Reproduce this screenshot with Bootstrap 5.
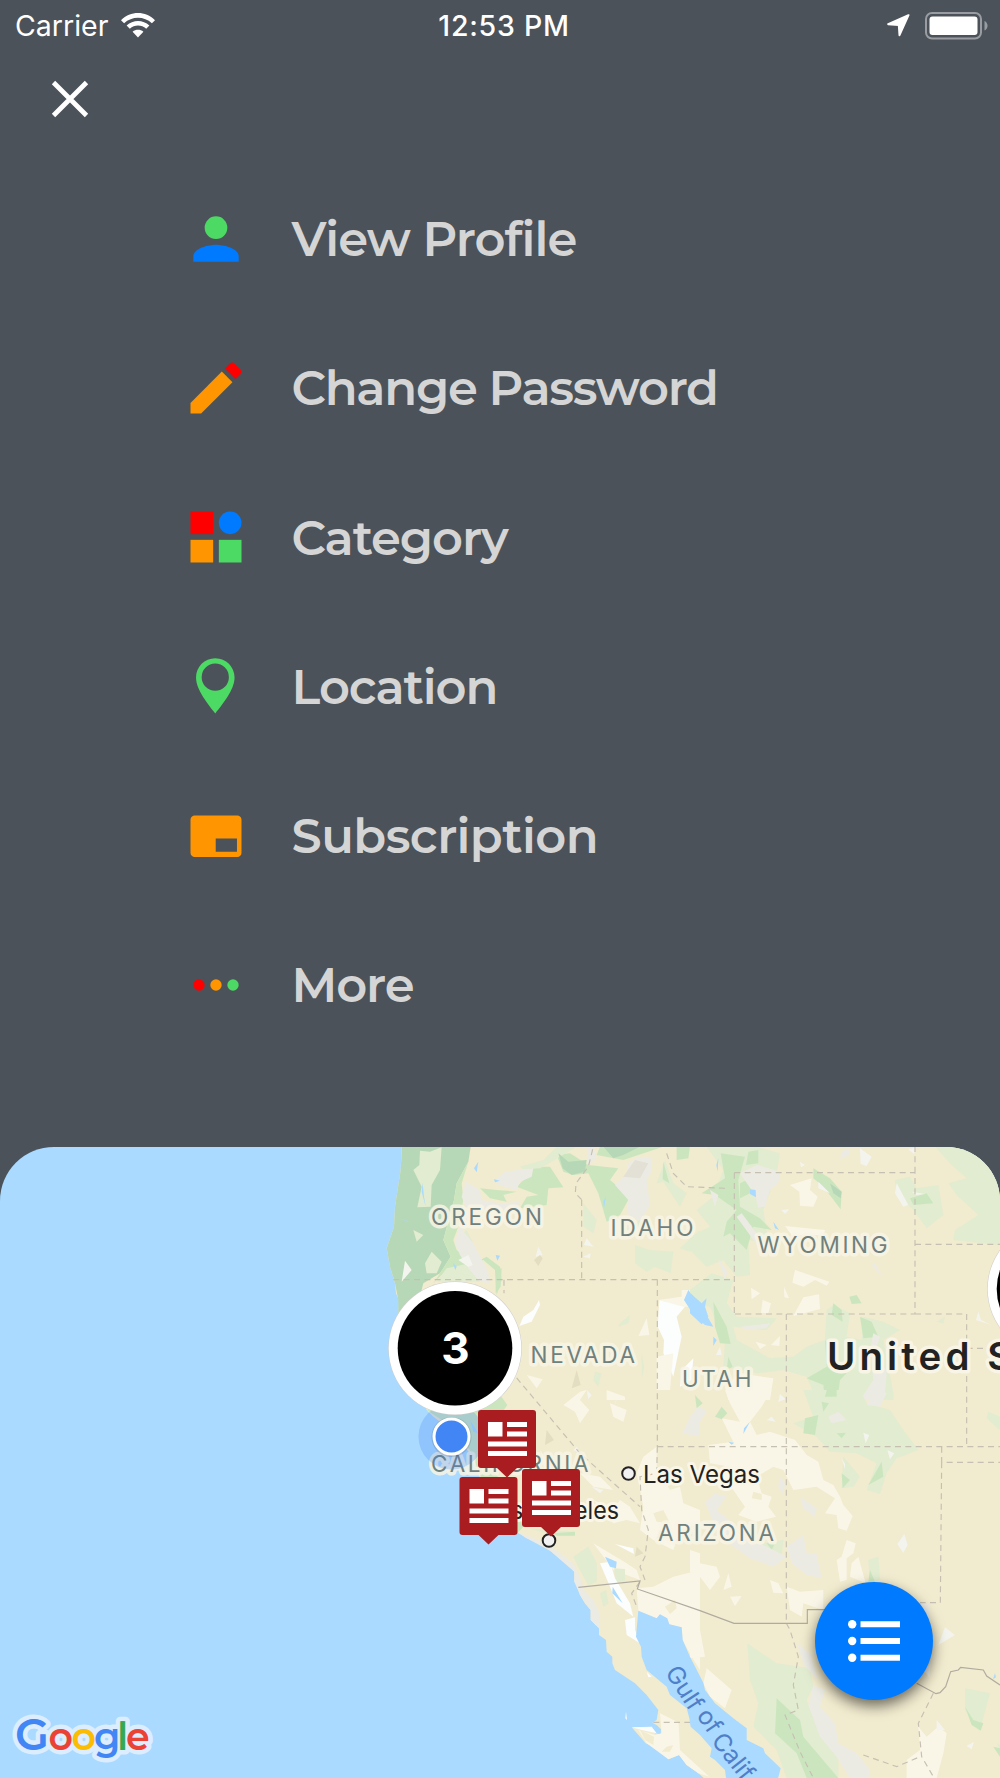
<!DOCTYPE html>
<html lang="en">
<head>
    <meta charset="UTF-8">
    <meta name="viewport" content="width=device-width, initial-scale=1.0">
    <title>Menu</title>

    <!-- Bootstrap 5 CSS -->
    <link href="https://cdn.jsdelivr.net/npm/bootstrap@5.3.0/dist/css/bootstrap.min.css" rel="stylesheet">
    <style>
        body {
            background-color: #4b5259;
            font-family: Inter, "Liberation Sans", sans-serif;
        }
        .app-screen {
            height: 1778px;
        }
        .status-bar {
            height: 50px;
            padding: 0 12px 0 15px;
            font-size: 28.5px;
            line-height: 51px;
        }
        .status-wifi {
            margin-left: 13px;
        }
        .status-time {
            font-weight: 550;
            letter-spacing: .75px;
            padding-left: 5px;
        }
        .status-battery {
            margin-left: 15px;
        }
        .close-row {
            height: 114px;
            padding: 26px 0 0 47px;
        }
        .menu-link {
            height: 149.25px;
            padding-left: 182px;
            gap: 41.5px;
            color: #d5d5d5;
            font-family: Montserrat, Inter, sans-serif;
            font-size: 48px;
            font-weight: 600;
            letter-spacing: -1.1px;
            line-height: 1;
        }
        .menu-link span {
            padding-top: 1px;
        }
        .menu-link .label-tight {
            letter-spacing: -1.25px;
        }
        .menu-link .label-wide {
            letter-spacing: -.55px;
        }
        .menu-link .label-profile {
            letter-spacing: -.85px;
        }
        .menu-link:hover {
            color: #fff;
        }
        .map-panel {
            height: 631px;
            border-radius: 54px 54px 0 0;
            background-color: #aadaff;
        }
        .map-svg text {
            font-family: Inter, "Liberation Sans", sans-serif;
        }
        .state-label {
            font-size: 22.5px;
            fill: #6f807d;
            stroke: #f8f5e6;
            stroke-opacity: .85;
            stroke-width: 7px;
            stroke-linejoin: round;
            paint-order: stroke;
        }
        .city-label {
            font-size: 24.5px;
            fill: #222;
            stroke: #faf6e7;
            stroke-width: 6px;
            stroke-linejoin: round;
            paint-order: stroke;
        }
        .map-svg .wordmark {
            font-family: Montserrat, Lato, sans-serif;
            font-weight: 600;
        }
        .list-fab {
            right: 67px;
            bottom: 78px;
            width: 118px;
            height: 118px;
            background-color: #007aff;
            box-shadow: 0 6px 14px rgba(0, 0, 0, .55);
        }
        .list-fab:hover {
            background-color: #006be0;
        }
    </style>
</head>
<body>

<div class="app-screen d-flex flex-column overflow-hidden">

    <!-- Status bar -->
    <div class="status-bar row g-0 text-white align-items-center">
        <div class="col d-flex align-items-center">
            <span>Carrier</span>
            <svg class="status-wifi" width="34" height="25" viewBox="0 0 34 25" fill="#fff">
                <path d="M0 7.2C9.500-2.300 24.500-2.300 34 7.200L30.900 10.200C23.200 2.800 10.800 2.800 3.100 10.200Z"/>
                <path d="M5.600 12.600C12 6.400 22 6.400 28.400 12.600L25.200 15.800C20.500 11.500 13.500 11.500 8.800 15.800Z"/>
                <path d="M11.600 18.800C14.700 16.200 19.300 16.200 22.400 18.800L17 24.500Z"/>
            </svg>
        </div>
        <div class="col-auto status-time">12:53 PM</div>
        <div class="col d-flex align-items-center justify-content-end">
            <svg width="23" height="23" viewBox="0 0 23 23" fill="#fff" stroke="#fff" stroke-width="2" stroke-linejoin="round">
                <path d="M21.500 1.200L1.200 10.200L11.800 11L12.500 21.200Z"/>
            </svg>
            <svg class="status-battery" width="63" height="28" viewBox="0 0 63 28">
                <rect x="1" y="1" width="55" height="25.500" rx="6" fill="none" stroke="#999da1" stroke-width="2"/>
                <rect x="4.500" y="4.600" width="48" height="18.400" rx="3" fill="#fff"/>
                <path d="M59.500 9C63.500 10.500 63.500 17 59.500 18.500Z" fill="#999da1"/>
            </svg>
        </div>
    </div>

    <!-- Close button -->
    <div class="close-row">
        <button type="button" class="btn p-0 border-0 d-flex" aria-label="Close">
            <svg width="46" height="46" viewBox="0 0 46 46" stroke="#fff" stroke-width="4.800">
                <path d="M6.500 6.500L39.500 39.500M39.500 6.500L6.500 39.500"/>
            </svg>
        </button>
    </div>

    <!-- Menu -->
    <nav class="d-flex flex-column flex-grow-1">
        <a href="#" class="menu-link d-flex align-items-center text-decoration-none">
            <svg width="68" height="68" viewBox="0 0 24 24">
                <circle cx="12" cy="8" r="4" fill="#4cd964"/>
                <path d="M12 14C9.330 14 4 15.340 4 18V20H20V18C20 15.340 14.670 14 12 14Z" fill="#007aff"/>
            </svg>
            <span class="label-profile">View Profile</span>
        </a>
        <a href="#" class="menu-link d-flex align-items-center text-decoration-none">
            <svg width="68" height="68" viewBox="0 0 24 24">
                <path d="M3 17.250V21H6.750L17.810 9.940L14.060 6.190Z" fill="#ff9500"/>
                <path d="M20.710 7.040C21.100 6.650 21.100 6.020 20.710 5.630L18.370 3.290C17.980 2.900 17.350 2.900 16.960 3.290L15.130 5.120L18.880 8.870Z" fill="#f00"/>
            </svg>
            <span class="label-tight">Change Password</span>
        </a>
        <a href="#" class="menu-link d-flex align-items-center text-decoration-none">
            <svg width="68" height="68" viewBox="0 0 24 24">
                <path d="M3 3H11V11H3Z" fill="#f00"/>
                <circle cx="17" cy="7" r="4" fill="#007aff"/>
                <path d="M3 13H11V21H3Z" fill="#ff9500"/>
                <path d="M13 13H21V21H13Z" fill="#4cd964"/>
            </svg>
            <span>Category</span>
        </a>
        <a href="#" class="menu-link d-flex align-items-center text-decoration-none">
            <svg width="68" height="68" viewBox="0 0 24 24">
                <path fill-rule="evenodd" d="M11.750 2.200C7.950 2.200 4.950 5.200 4.950 9C4.950 13.300 9.100 18.300 11.750 21.700C14.400 18.300 18.550 13.300 18.550 9C18.550 5.200 15.550 2.200 11.750 2.200ZM11.750 4.100A4.800 4.800 0 1 1 11.740 13.700A4.800 4.800 0 1 1 11.750 4.100Z" fill="#4cd964"/>
            </svg>
            <span>Location</span>
        </a>
        <a href="#" class="menu-link d-flex align-items-center text-decoration-none">
            <svg width="68" height="68" viewBox="0 0 24 24">
                <path fill-rule="evenodd" d="M4.500 4.800H19.500A1.500 1.500 0 0 1 21 6.300V17.900A1.500 1.500 0 0 1 19.500 19.400H4.500A1.500 1.500 0 0 1 3 17.900V6.300A1.500 1.500 0 0 1 4.500 4.800ZM11.900 12.900V17.600H19.400V12.900Z" fill="#ff9500"/>
            </svg>
            <span class="label-wide">Subscription</span>
        </a>
        <a href="#" class="menu-link d-flex align-items-center text-decoration-none">
            <svg width="68" height="68" viewBox="0 0 24 24">
                <circle cx="6" cy="12" r="2" fill="#f00"/>
                <circle cx="12" cy="12" r="2" fill="#ff9500"/>
                <circle cx="18" cy="12" r="2" fill="#4cd964"/>
            </svg>
            <span>More</span>
        </a>
    </nav>

    <!-- Map -->
    <div class="map-panel position-relative overflow-hidden flex-shrink-0">
        <svg class="map-svg d-block" width="1000" height="631" viewBox="0 1147 1000 631">
            <defs>
                <g id="news-pin">
                    <path d="M3 0H55Q58 0 58 3V55Q58 58 55 58H39L29 67.500L19 58H3Q0 58 0 55V3Q0 0 3 0Z" fill="#a91d20"/>
                    <path d="M10 12H24.500V26.500H10ZM29 12H49V17H29ZM29 21.500H49V26.500H29ZM10 31.500H49V36.500H10ZM10 41H49V46H10Z" fill="#fff"/>
                </g>
            </defs>

            <g transform="translate(380 1390) scale(.33333)">
                <!-- Land, with the Pacific coast on its left side -->
                <path fill="#f1ebcf" d="M66-740L62-660L45-550L42-490L20-425L30-370L45-320L48-290L57-270L55-220L80-100L140 60L160 80L200 110L270 190L290 240L330 330L400 420L440 445L490 462L510 482L540 498L570 530L583 545L583 575L595 592L600 615L615 640L632 660L632 690L657 715L657 735L678 750L680 785L697 800L697 820L705 840L765 880L800 915L835 960L830 990L817 998L830 1005L843 1018L842 1033L825 1030L815 1010L790 1018L755 1012L797 1060L845 1080L865 1108L897 1095L920 1125L955 1150L990 1180H1900V-750Z"/>

                <!-- Oregon, Idaho, Nevada -->
                <g transform="translate(0 -750)">
                    <path fill="#b7d8b6" d="M66 20H272L265 65L230 130L222 180L190 300L212 350L180 400L130 430L115 490L55 520L55 480L45 430L30 380L20 325L42 260L45 200L62 90Z"/>
                    <path fill="#cbe6bf" d="M265 65L245 130L250 180L235 260L220 300L230 330L280 370L320 350L360 380L365 420L350 465L345 390L310 360L270 375L200 390L160 430L180 400L212 350L190 300L222 180L230 130Z"/>
                    <path fill="#e2ecd0" d="M120 32L150 35L185 22L180 90L155 135L152 200L112 202L125 140L100 90L118 75ZM155 335L185 365L170 400L140 400L135 370ZM200 385L270 370L310 425L170 425ZM765 315L810 330L880 335L872 400L825 380L800 395L765 370ZM900 325L960 270V320L930 335ZM610 190L650 240L640 280L610 260ZM720 550L750 525L745 550L715 560Z"/>
                    <path fill="#cbe6bf" d="M410 140L440 110L450 80L510 80L550 142L505 145L500 195L420 205L440 170L475 165ZM300 145L350 150L410 155L370 165L380 185L330 175ZM530 45L570 40L625 75L715 85L690 120L750 170L720 225L680 245L655 160L625 100L580 105L550 95ZM660 20H850L730 60L650 45Z"/>
                    <path fill="#e2ecd0" d="M420 80L490 60L530 20H590L540 50L480 85L430 88ZM260 270L280 310L275 330L235 290Z"/>
                    <path fill="#b7d8b6" d="M535 40L565 65L620 60L615 95L575 105L548 85ZM670 20H780L730 45L700 55Z"/>
                    <path fill="#ecebe3" d="M258 125L300 150L305 180L360 190L420 185L400 215L300 205L260 250L250 275L280 310L325 395L328 430L300 425L265 385L240 345L225 310L245 230L262 210L245 170ZM350 115L375 95L460 85L455 110L420 125L410 150L355 135ZM620 20H640L650 55L625 75ZM745 70L775 50L815 55L815 95L800 120L810 195L780 245L740 220L745 180L705 135L740 100Z"/>
                    <path fill="#e3e0d5" d="M765 60L805 70L780 115L730 110Z"/>
                    <path fill="#e2ecd0" d="M855 60L880 130L920 160L900 200L850 125L830 130ZM740 270L780 240L800 260ZM100 270L130 285L110 305Z"/>
                    <path fill="#cbe6bf" d="M850 65L868 130L848 118ZM890 20H930L925 55L890 60ZM365 385L362 440L347 460L347 390Z"/>
                    <path fill="#f4f4ef" d="M75 362L95 390L65 425ZM235 360L265 345L278 375L265 380ZM475 320L488 345L467 350ZM620 295L640 320L612 315ZM610 350L632 340L630 355Z"/>
                    <path fill="#fcfdfd" d="M477 480L480 495L455 545L418 558L430 530L460 510ZM838 480H870L905 475L915 500L890 530L905 590L880 710L850 640L852 600L833 560ZM905 690L940 655L935 720L900 740Z"/>
                    <path fill="#faf6e7" d="M835 480L905 470V450L940 450L930 500L910 500ZM800 535L808 585L775 588ZM440 705L488 718L470 745ZM830 650L880 640L870 750H830ZM680 750L735 770V780H680Z"/>
                    <path fill="#e3ddc1" d="M480 345L488 355L475 378L462 360ZM590 690L602 735L575 745Z"/>
                    <path fill="#e2ecd0" d="M645 695L664 700L655 740L640 720ZM785 640L792 680L786 715Z"/>
                    <path fill="#aadaff" d="M295 65L290 97L282 85ZM128 128L132 170L137 200L125 155ZM55 235L95 247L80 244ZM342 118L360 122L345 127ZM678 168L672 205L670 185ZM347 345L360 347L352 362ZM218 368L230 380L226 390ZM925 450L965 500L1000 560L975 555L940 525L925 500L912 480Z"/>
                </g>

                <!-- Montana edge, Wyoming, Colorado -->
                <g transform="translate(930 -750)">
                    <path fill="#e2ecd0" d="M50 20H200L270 40L260 100L220 210L235 310L175 300L180 405L140 410L100 360L50 380L0 330V290L60 260L20 210L70 170L100 90ZM735 20H930V315L790 300L795 270L865 225L800 165L775 130L830 115L785 75ZM615 120L660 110L680 145L745 135L760 225L710 265L670 210L620 160ZM65 400L130 420L110 490L140 530L260 535L230 570L130 560L140 600L240 655L310 650L350 620L405 600L410 510L430 495L480 520L470 590L515 600L520 530L580 545L630 570L580 600L610 760V780H380L350 710L280 690L200 700L100 680L105 610L60 500L0 490V450ZM740 545L765 530L760 550Z"/>
                    <path fill="#cbe6bf" d="M92 40L165 50L145 120L150 200L210 235L245 270L190 260L170 330L120 280L100 290L110 245L140 210L75 165L35 160L105 115ZM175 35L205 30V70L168 75ZM150 130L190 110L180 160L150 175ZM370 85L420 115L455 155L452 208L400 140L370 115ZM660 175L710 160L730 190L670 195ZM70 485L110 560L122 612L90 610L75 560ZM430 490L455 510L458 545L425 525ZM478 470L500 465L515 490L485 492ZM510 530L545 545L565 590L520 595ZM405 600L440 640L430 680L470 700L450 720L442 780H405L400 735L350 715L410 680ZM115 650L128 680L110 690Z"/>
                    <path fill="#b7d8b6" d="M420 130L455 155L452 175L430 160Z"/>
                    <path fill="#ecebe3" d="M150 100L200 75L270 95L265 130L240 150L225 200L205 203L195 165ZM455 35L475 25L480 45L450 58ZM140 230L155 220L200 280L205 320ZM545 375L555 368L577 412ZM550 580L570 590L560 620L590 700L585 760L560 780H510L550 720L540 630ZM60 150L85 165L75 200ZM85 355L112 395L105 420ZM150 560L240 550L230 565L165 568Z"/>
                    <path fill="#f4f4ef" d="M510 25L545 50L530 78L512 72ZM385 125L420 160L385 145ZM330 65L345 75L333 82ZM665 155L705 162L680 165ZM620 130L655 195L640 200L615 160ZM655 28L677 22L672 42ZM275 210L298 208L285 222ZM865 515L873 540L905 555L858 540ZM90 620L95 645L78 645Z"/>
                    <path fill="#faf6e7" d="M300 135L365 115L360 150L383 170L370 200L330 197L328 155ZM285 258L405 270L400 285H305ZM315 390L418 425L410 437L375 420L340 440L307 428ZM183 443L210 460L185 478ZM218 480L243 490L235 520L213 518ZM340 472L387 463L390 507L310 528ZM282 440L297 475L283 472ZM270 588L268 618L243 615ZM197 605L230 615L210 627ZM105 740L150 700L250 715L240 780H115Z"/>
                    <path fill="#aadaff" d="M180 148L197 150L198 172L180 162ZM250 245L267 270L255 265ZM85 55L83 95L79 75ZM0 458L35 490L50 475L45 500L55 530L35 553L0 520ZM70 590L80 600L70 618Z"/>
                </g>

                <!-- California, Baja and Sonora -->
                <path fill="#cbe6bf" d="M140 60L300 0H350L382 45L370 62L300 60V200L380 290L430 410L412 430L330 330L270 180L200 100Z"/>
                <path fill="#e2ecd0" d="M410 370L430 410L500 420L585 425L580 437L520 435L430 410ZM580 500L625 470L650 520V575L625 585L600 540ZM660 610L678 600L685 640L670 650Z"/>
                <path fill="#cbe6bf" d="M520 430L585 425V437L530 437Z"/>
                <path fill="#ecebe3" d="M412 425L500 460L580 520L600 560L612 600L640 630L660 670L657 715L632 690V660L615 640L600 615L583 575V545L510 482L440 445ZM870 185L900 145L930 80L960 40V140L910 130Z"/>
                <path fill="#faf6e7" d="M550 45L600 5L620 0L600 30L628 60L600 100L585 65ZM690 40L740 60L730 95L700 80ZM480 180L520 240L500 260ZM600 250L660 260L700 300L640 290ZM770 250L790 200L830 170V235L870 300L900 290L910 340L960 360V400L900 420L880 480L820 450L780 420L790 350ZM640 330L700 360L720 330L750 350L780 400L740 390L700 400ZM640 460L740 520L770 540L780 570L700 540ZM770 595L820 590L880 560L960 540V840L935 800L908 750L905 712L868 703L840 673L830 685L775 662ZM840 970L900 1000L930 985L955 1040L1010 1090L1020 1170L955 1150L920 1125L897 1095L865 1108L800 1060L775 1020L825 1035L845 1030Z"/>
                <path fill="#e2ecd0" d="M702 535L735 537V575L708 575Z"/>
                <path fill="#f1ebcf" d="M830 530L860 510L885 545L845 575ZM855 650L885 630L890 655L870 672ZM860 1070L880 1065L870 1085L845 1085ZM780 1020L822 1040L820 1065L795 1050ZM820 370L850 360L870 400L830 395ZM895 990L930 985L1020 1110L1040 1180H1010L900 1080Z"/>
                <path fill="#fcfdfd" d="M660 520L690 515L705 565L750 640L760 680L710 640L690 590ZM735 690L765 682V720L783 762L740 735ZM705 462L760 475L762 492ZM738 965L741 990L736 985ZM800 845L815 860L805 862ZM755 1012L815 1010L830 1030L785 1020Z"/>
                <path fill="#aadaff" d="M675 500L710 515L708 535L690 530ZM698 590L728 640L697 610ZM270 90L295 130L280 125Z"/>
                <path fill="#e3ddc1" d="M500 120L522 150L495 165ZM770 470L790 490L765 500ZM840 420L870 440L830 445Z"/>
                <path fill="#f4f4ef" d="M620 0L635 15L625 28ZM715 10L705 40L700 60ZM590 170L600 190L580 180ZM635 290L670 300L660 310Z"/>

                <!-- Arizona, New Mexico, Chihuahua -->
                <g transform="translate(930 0)">
                    <path fill="#faf6e7" d="M105 0H245L215 50L180 95L200 135L240 125L315 150L350 195L385 215L400 270L430 285L450 320L460 345L488 378L470 422L445 415L440 375L405 370L435 325L380 290L310 300L280 240L250 230L200 260L215 310L245 320L235 350L258 380L200 395L145 375L165 350L130 300L90 270L120 230L60 220L55 165L130 155L95 85L150 95L120 40ZM0 480L30 490V520L80 530L90 560L60 600L30 560L0 545ZM115 550L125 590L100 600ZM240 570L265 580L280 610L250 608ZM120 620L155 618L135 648ZM290 590L330 605L400 600V660L340 640L335 680L300 660ZM470 450L497 460L490 490L470 505V570L450 575L440 510L455 500ZM505 500L527 580L480 560L485 520ZM0 660L30 720L45 800L0 805ZM50 835L125 900L105 955L60 920L40 880ZM685 1010L710 1040L745 1010L770 1030L760 1090L740 1164H650V1110L690 1080Z"/>
                    <path fill="#f1ebcf" d="M190 305L215 312V330L185 325Z"/>
                    <path fill="#e2ecd0" d="M340 0H510L530 40L600 60L640 120L685 180L620 205L590 250L570 312L530 300L560 220L500 190L420 185L380 140L310 100L370 80ZM460 200L510 260L490 290L455 295ZM215 460L280 450L275 500L245 505ZM535 510L565 500L570 570L540 580ZM172 760L260 820L360 835L370 890L350 930L400 1040L445 1100V1164H290L260 1080L190 1010L205 940L180 870ZM825 895L900 910L870 1020L825 960ZM895 65L930 80V120L890 85ZM920 1060L930 1065V1080Z"/>
                    <path fill="#cbe6bf" d="M410 0H440V20L405 20ZM345 85L385 75L375 135L340 130ZM395 35L417 40L400 65ZM440 130L468 128L455 145ZM455 250L480 270L458 295ZM575 215L580 260L535 285ZM75 80L95 50L112 70L95 88ZM15 15L38 40L20 55ZM260 925L330 990L340 1040L445 1164H350L320 1090L255 1030ZM825 950L850 990L880 1000L872 1022L845 1005ZM910 1070L930 1075V1100ZM230 460H255L245 480ZM540 540L555 575L535 575Z"/>
                    <path fill="#ecebe3" d="M540 25L575 0L590 10L570 50L530 45ZM415 80L445 65L470 90L425 100ZM45 335L75 310L110 320L80 360L130 400L110 440L200 455L290 500L250 530L180 505L110 455L70 400ZM290 470L340 435L350 490L380 490L395 565L350 555L305 520ZM330 320L380 355L375 380L340 355ZM270 260L285 280L280 315L265 290ZM0 90L30 50L50 65L0 140ZM370 885L405 900L390 950L435 1000L445 1060L500 1090L540 1140V1164H480L440 1100L390 1040L355 945ZM320 760L360 790L385 870L345 830ZM690 640H718V700L690 680Z"/>
                    <path fill="#f4f4ef" d="M520 128L538 135L527 160ZM592 180L613 190L600 208ZM643 432L653 465L640 488L622 462ZM765 712L795 735L745 765ZM740 990L765 1020L740 1020ZM830 1068L852 1055L845 1078ZM230 90L245 80L257 95ZM270 12L287 28L265 35ZM455 205L465 222V238ZM700 840L722 820L718 862Z"/>
                    <path fill="#aadaff" d="M180 95L160 132L162 115ZM115 155L133 158L125 164ZM915 850L918 862L909 868Z"/>
                </g>

                <!-- Gulf of California -->
                <path fill="#aadaff" d="M775 662L830 685L840 673L862 685L868 703L905 712L908 750L930 800L970 878L975 900L1005 940L1060 985L1100 1015V1050L1150 1075L1155 1090L1202 1135L1190 1180H1040L1035 1140L1005 1110L990 1100L995 1075L960 1035L932 1010L928 985L920 955L870 915L860 890L800 840L785 800L783 770L768 740Z"/>

                <!-- State and country borders -->
                <g fill="none" stroke="#c6c0b2" stroke-width="3.500" stroke-dasharray="18 13">
                    <path d="M40-331H1063M372-331V-290M390-60L600 190L780 350M605-570V-331M605-571L586-590L588-620L625-670L640-730M832-331V170M832 170L830 250L780 260L785 360L805 420L795 500L780 530L795 570M832 170H1860M860-710L880-650L920-610L1040-605"/>
                    <path d="M1063-652V-228M1063-652H1605V-228H1063M1605-228H1760V165M1605-652V-730M1605-437H1860M1219-228V700M1760-125H1860M1685 170V217H1860M1685 217L1681 638H1620M1219 700L1230 720L1255 800L1240 885L1255 960L1215 975L1260 1085L1300 1164M820 997H930M780 575L755 610L770 650M1660 910L1615 1000L1625 1100L1660 1160M1450 1095L1550 1130L1620 1100"/>
                </g>
                <path fill="none" stroke="#b0ab9f" stroke-width="3.500" d="M595 592L780 573L772 597L960 662L1062 700H1282V659H1340M1610 880L1668 911L1680 908L1697 890L1712 845L1735 840L1742 832L1810 840L1820 858L1860 885"/>
            </g>

            <!-- Labels -->
            <text class="state-label" x="431" y="1224.500" textLength="111">OREGON</text>
            <text class="state-label" x="610.500" y="1235.500" textLength="83">IDAHO</text>
            <text class="state-label" x="757.500" y="1252.500" textLength="130">WYOMING</text>
            <text class="state-label" x="530.500" y="1363" textLength="104.500">NEVADA</text>
            <text class="state-label" x="682" y="1386.500" textLength="69.500">UTAH</text>
            <text class="state-label" x="431" y="1471.500" textLength="157.500">CALIFORNIA</text>
            <text class="state-label" x="658" y="1540.500" textLength="116">ARIZONA</text>
            <text class="city-label" x="643" y="1482.500" textLength="117" lengthAdjust="spacingAndGlyphs">Las Vegas</text>
            <text class="city-label" x="484" y="1518.500" textLength="135" lengthAdjust="spacingAndGlyphs">Los Angeles</text>
            <text x="827" y="1369.500" font-size="38.500" font-weight="600" letter-spacing="4.100" fill="#222" stroke="#f8f5e6" stroke-width="7" stroke-linejoin="round" paint-order="stroke">United S</text>
            <g font-size="24.500" fill="#4f7fc9">
                <text transform="translate(664.500 1672.500) rotate(57)">Gulf</text>
                <text transform="translate(696 1715.500) rotate(56)">of</text>
                <text transform="translate(710.500 1741) rotate(52)">Calif</text>
            </g>

            <circle cx="628.500" cy="1473.500" r="6.300" fill="#f1f1f1" stroke="#222" stroke-width="2"/>
            <circle cx="549" cy="1540.500" r="6.300" fill="#f1f1f1" stroke="#222" stroke-width="2"/>

            <!-- Clusters, own position and pins -->
            <circle cx="451.500" cy="1436.500" r="33" fill="#4285f4" fill-opacity=".25"/>
            <circle cx="451.500" cy="1437" r="20" fill="#000" fill-opacity=".12"/>
            <circle cx="451.500" cy="1436.500" r="17.500" fill="#4285f4" stroke="#fff" stroke-width="3"/>
            <circle cx="455" cy="1348.300" r="66.800" fill="#ccc"/>
            <circle cx="455" cy="1348.300" r="66.300" fill="#fff"/>
            <circle cx="455" cy="1348.300" r="57.300" fill="#000"/>
            <text x="455.500" y="1364.300" font-size="44" font-weight="700" text-anchor="middle" fill="#fff">3</text>
            <circle cx="1054" cy="1289" r="66.800" fill="#ccc"/>
            <circle cx="1054" cy="1289" r="66.300" fill="#fff"/>
            <circle cx="1054" cy="1289" r="57.300" fill="#000"/>
            <use href="#news-pin" x="478" y="1410"/>
            <use href="#news-pin" x="459.500" y="1477"/>
            <use href="#news-pin" x="522" y="1469"/>

            <!-- Google wordmark, drawn twice: pale outline below, letters above -->
            <use href="#wordmark-text" stroke="#dceefd" stroke-width="9" stroke-linejoin="round"/>
            <text id="wordmark-text" class="wordmark" y="1750"><tspan x="15" font-size="44" fill="#4285f4">G</tspan><tspan x="48.500" font-size="38" fill="#ea4335">o</tspan><tspan x="71.500" font-size="38" fill="#fbbc05">o</tspan><tspan x="94" font-size="38" fill="#4285f4">g</tspan><tspan x="117" font-size="39" fill="#34a853">l</tspan><tspan x="126" font-size="38" fill="#ea4335">e</tspan></text>
        </svg>

        <!-- Floating list button -->
        <button type="button" class="list-fab btn rounded-circle border-0 p-0 position-absolute d-flex align-items-center justify-content-center" aria-label="List">
            <svg width="52" height="42" viewBox="0 0 52 42" fill="#fff">
                <circle cx="4.200" cy="4.200" r="4.200"/><circle cx="4.200" cy="21" r="4.200"/><circle cx="4.200" cy="37.800" r="4.200"/>
                <path d="M12.500 1.300H52V7.300H12.500ZM12.500 18H52V24H12.500ZM12.500 34.800H52V40.800H12.500Z"/>
            </svg>
        </button>
    </div>
</div>

<!-- Bootstrap 5 JS and Popper.js -->
<script src="https://cdn.jsdelivr.net/npm/bootstrap@5.3.0/dist/js/bootstrap.bundle.min.js"></script>
</body>
</html>
